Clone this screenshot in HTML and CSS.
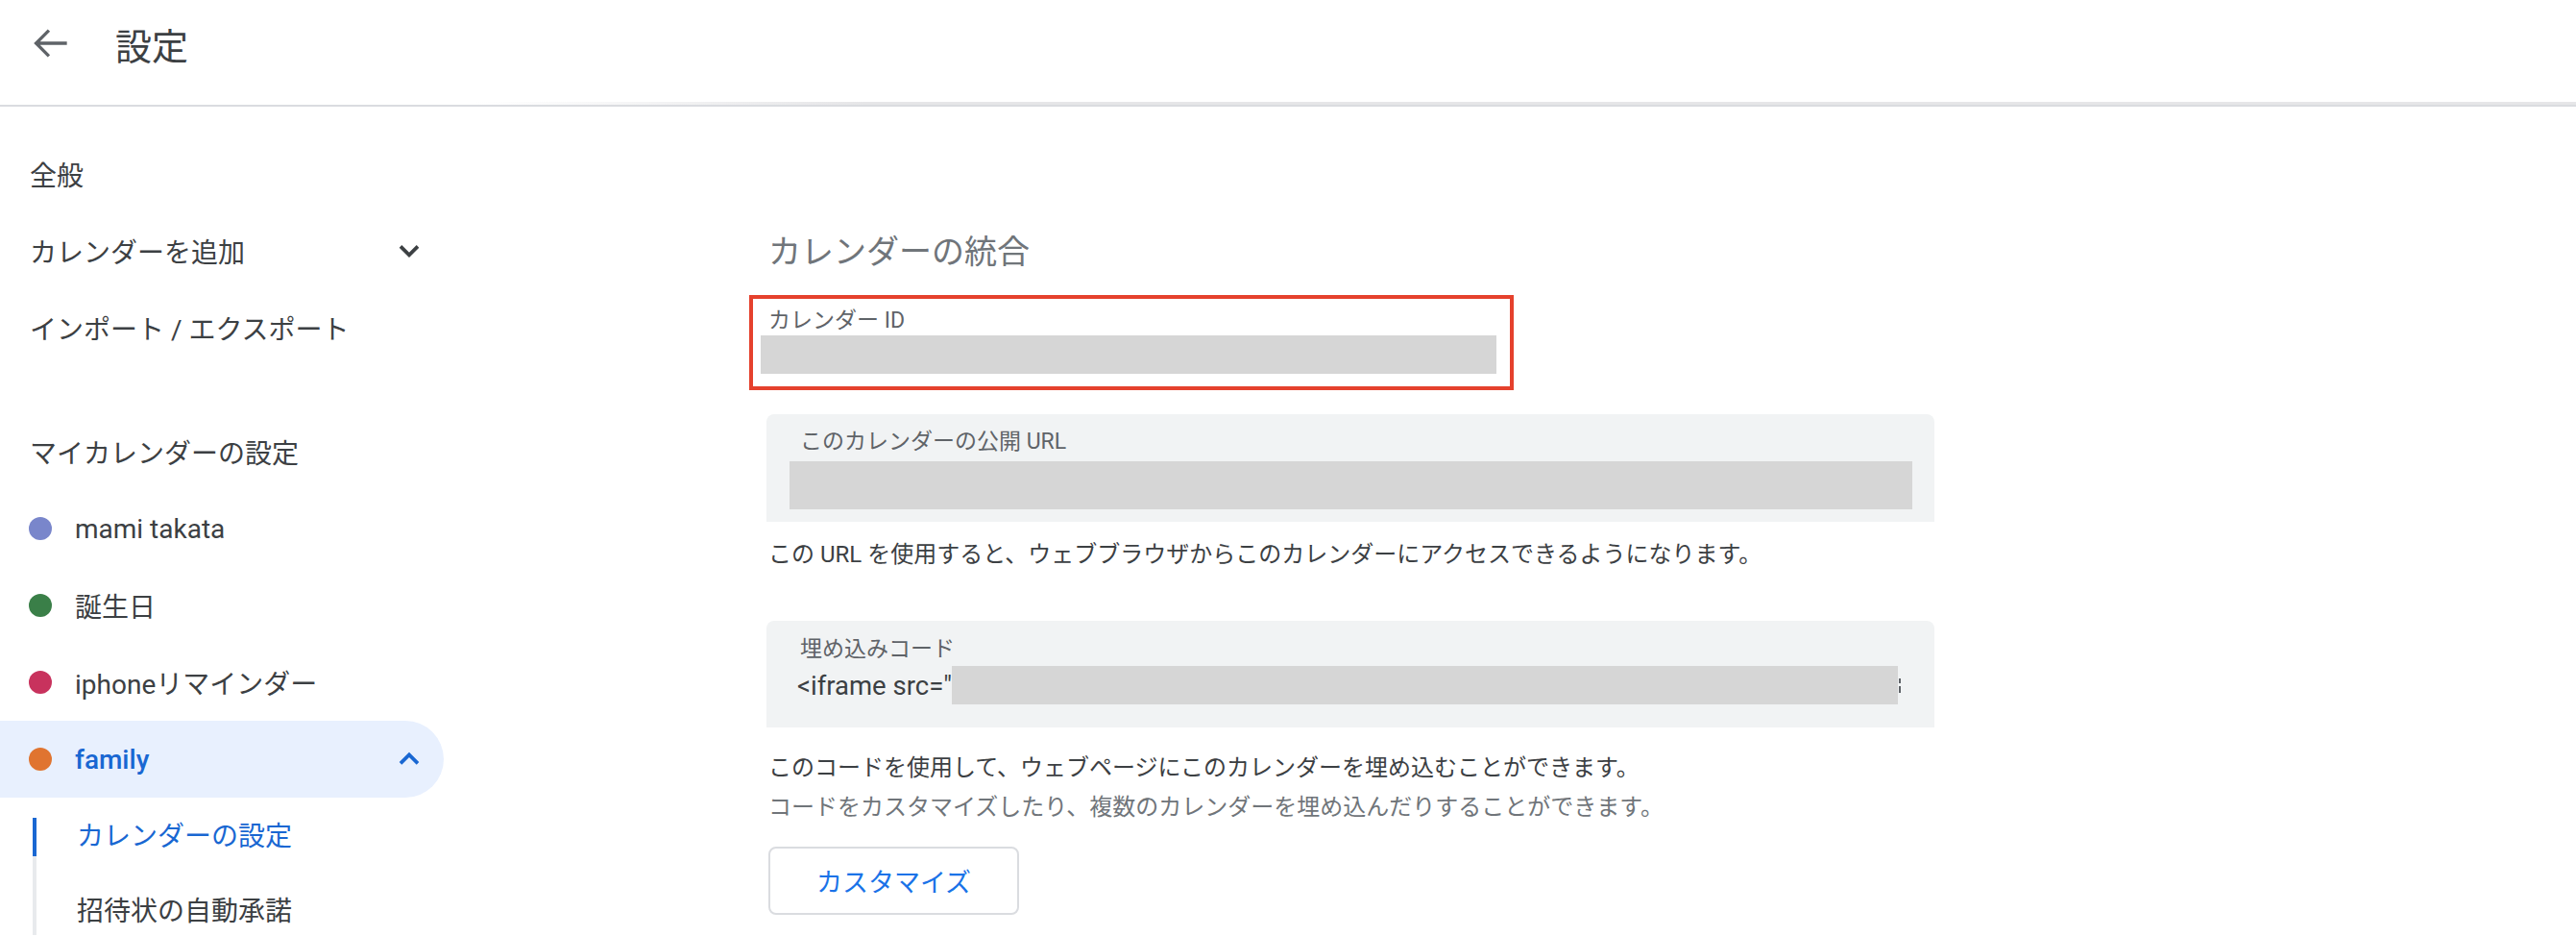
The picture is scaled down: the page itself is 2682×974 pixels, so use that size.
FILE: index.html
```html
<!DOCTYPE html>
<html lang="ja">
<head>
  <meta charset="UTF-8" />
  <title>設定</title>
  <link rel="stylesheet" href="styles.css">
</head>
<body>
  <header class="topbar">
    <button class="back" aria-label="戻る">
      <svg viewBox="0 0 24 24"><path d="M20 12H4.8M11 5.6 4.6 12 11 18.4" /></svg>
    </button>
    <h1>設定</h1>
  </header>

  <div class="layout">
    <nav class="sidebar">
      <a class="nav-item">全般</a>
      <a class="nav-item">カレンダーを追加
        <svg class="chev" viewBox="0 0 24 24"><path d="M6.6 9.2l5.4 5.4 5.4-5.4" /></svg>
      </a>
      <a class="nav-item">インポート / エクスポート</a>

      <div class="nav-item nav-heading">マイカレンダーの設定</div>
      <a class="nav-item cal"><span class="dot lavender"></span>mami takata</a>
      <a class="nav-item cal"><span class="dot basil"></span>誕生日</a>
      <a class="nav-item cal"><span class="dot radicchio"></span>iphoneリマインダー</a>
      <a class="nav-item cal open"><span class="dot pumpkin"></span>family
        <svg class="chev" viewBox="0 0 24 24"><path d="M6.6 14.6l5.4-5.4 5.4 5.4" /></svg>
      </a>
      <div class="sub-list">
        <a class="sub-item active">カレンダーの設定</a>
        <a class="sub-item">招待状の自動承諾</a>
      </div>
    </nav>

    <main class="content">
      <h2>カレンダーの統合</h2>

      <!-- 赤枠：カレンダー ID -->
      <div class="id-box">
        <div class="label">カレンダー ID</div>
        <div class="redact"></div>
      </div>

      <div class="field">
        <div class="label">このカレンダーの公開 URL</div>
        <div class="redact tall"></div>
      </div>
      <p class="desc">この URL を使用すると、ウェブブラウザからこのカレンダーにアクセスできるようになります。</p>

      <div class="field embed">
        <div class="label">埋め込みコード</div>
        <div class="code-row">
          <span class="code">&lt;iframe src="</span>
          <span class="redact code-bar"></span>
          <span class="cut"></span>
        </div>
      </div>
      <p class="desc gap">このコードを使用して、ウェブページにこのカレンダーを埋め込むことができます。</p>
      <p class="desc sub">コードをカスタマイズしたり、複数のカレンダーを埋め込んだりすることができます。</p>

      <button class="customize">カスタマイズ</button>
    </main>
  </div>
</body>
</html>
```

FILE: styles.css
```css
* { box-sizing: border-box; }
html, body {
  margin: 0; padding: 0; height: 974px; overflow: hidden;
  background: #fff; color: #3c4043;
  font-family: Roboto, "Noto Sans CJK JP", sans-serif;
}

/* barre du haut */
.topbar {
  display: flex; align-items: center;
  height: 111px; padding: 0 0 19px 28px;
  border-bottom: 2px solid #dadce0;
  background:
    linear-gradient(to right, rgba(255,255,255,0) 494px, #e6e6e8 900px) bottom / 100% 3px no-repeat;
}
.back {
  width: 50px; height: 50px; padding: 0;
  border: none; background: none; cursor: pointer;
}
.back svg {
  width: 50px; height: 50px; display: block;
  fill: none; stroke: #5f6368; stroke-width: 1.6;
}
h1 {
  margin: 0 0 0 42px;
  font-size: 38px; font-weight: 400; color: #3c4043;
}

.layout {
  display: grid; grid-template-columns: 462px 1fr;
}

/* menu de gauche */
.sidebar {
  display: flex; flex-direction: column;
  padding-top: 30px;
}
.nav-item {
  display: flex; align-items: center;
  height: 80px; padding: 0 16px 0 31px;
  font-size: 28px; color: #3c4043;
}
.nav-heading { margin-top: 49px; }
.chev {
  width: 40px; height: 40px; margin-left: auto;
  fill: none; stroke: #3c4043; stroke-width: 2.2;
}
.cal { padding-left: 30px; }
.dot {
  width: 24px; height: 24px; border-radius: 50%;
  margin-right: 24px; flex: none;
}
.lavender { background: #7986cb; }
.basil { background: #3a7f48; }
.radicchio { background: #c8325d; }
.pumpkin { background: #e07430; }
.open {
  background: #e8f0fe; color: #1967d2; font-weight: 500;
  border-radius: 0 40px 40px 0;
}
.open .chev { stroke: #1967d2; }

.sub-list {
  display: flex; flex-direction: column; gap: 38px;
  margin: 21px 0 0 34px;
  border-left: 4px solid #e8eaed;
  min-height: 122px;
}
.sub-item {
  height: 40px; line-height: 40px; padding-left: 42px;
  font-size: 28px; color: #3c4043;
}
.sub-item.active {
  margin-left: -4px;
  border-left: 4px solid #1967d2;
  color: #1967d2;
}

/* contenu */
.content {
  padding: 131px 0 0 338px;
}
h2 {
  margin: 0 0 24px;
  font-size: 34px; line-height: 41px; font-weight: 400; color: #70757a;
}
.label {
  font-size: 23px; line-height: 28px; color: #5f6368;
}
.redact { background: #d6d6d6; height: 40px; }

.id-box {
  width: 796px; margin-left: -20px;
  border: 4px solid #e5412d;
  padding: 9px 14px 13px 8px;
}
.id-box .label { padding-left: 8px; margin-bottom: 1px; }

.field {
  width: 1216px; margin: 25px 0 0 -2px;
  background: #f1f3f4; border-radius: 8px 8px 0 0;
  padding: 15px 23px 13px 24px;
}
.field .label { padding-left: 11px; margin-bottom: 6px; }
.redact.tall { height: 50px; }

.desc {
  margin: 18px 0 0;
  font-size: 24px; line-height: 32px; color: #3c4043;
}
.embed { margin-top: 53px; padding: 16px 23px 24px 24px; }
.embed .label { margin-bottom: 3px; }
.code-row {
  display: flex; align-items: center; height: 40px;
  padding-left: 8px;
  font-size: 27.5px; color: #3c4043;
}
.code { white-space: pre; }
.code-bar { width: 985px; flex: none; }
/* bout de caractère qui dépasse du masque */
.cut {
  width: 3px; height: 40px; margin-left: 1px;
  background:
    linear-gradient(#5f6368, #5f6368) 0 13px / 2px 5px no-repeat,
    linear-gradient(#5f6368, #5f6368) 0 21px / 2px 7px no-repeat;
}

.desc.gap { margin-top: 26px; }
.desc.sub { margin-top: 9px; color: #70757a; }

.customize {
  display: block; margin-top: 25px;
  width: 261px; height: 71px;
  background: #fff; border: 2px solid #dadce0; border-radius: 8px;
  font-family: inherit; font-size: 27px; color: #1a73e8;
  cursor: pointer;
}
```
